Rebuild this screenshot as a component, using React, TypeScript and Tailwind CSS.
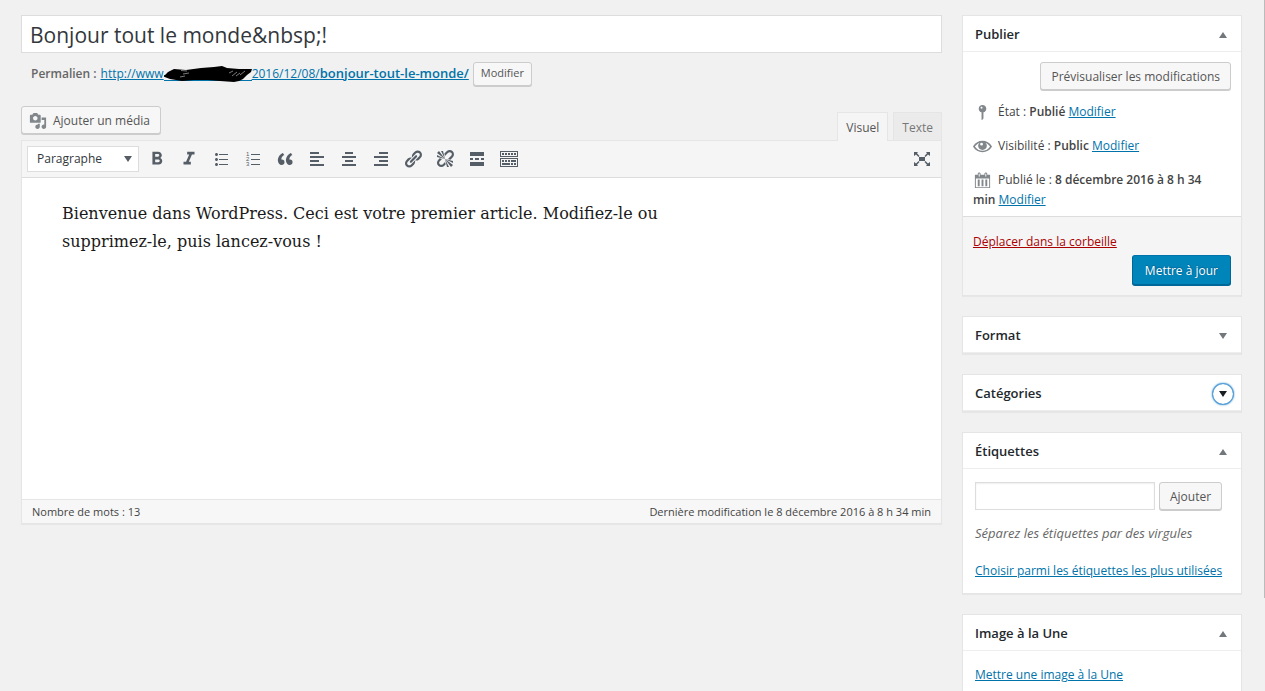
import type { ReactNode } from "react";
import { MdFormatBold, MdFormatItalic } from "react-icons/md";

const paths = {
  ul: "M5.5 7C4.67 7 4 6.33 4 5.5 4 4.68 4.67 4 5.5 4 6.32 4 7 4.68 7 5.5 7 6.33 6.32 7 5.5 7zM8 5h9v1H8V5zm-2.5 7c-.83 0-1.5-.67-1.5-1.5C4 9.68 4.67 9 5.5 9c.82 0 1.5.68 1.5 1.5 0 .83-.68 1.5-1.5 1.5zM8 10h9v1H8v-1zm-2.5 7c-.83 0-1.5-.67-1.5-1.5 0-.82.67-1.5 1.5-1.5.82 0 1.5.68 1.5 1.5 0 .83-.68 1.5-1.5 1.5zM8 15h9v1H8v-1z",
  quote:
    "M9.49 13.22c0-.74-.2-1.38-.61-1.9-.62-.78-1.83-.88-2.53-.72-.29-1.65 1.11-3.75 2.92-4.65L7.88 4c-2.73 1.3-5.42 4.28-4.96 8.05C3.21 14.43 4.59 16 6.54 16c.85 0 1.56-.25 2.12-.75s.83-1.18.83-2.03zm8.05 0c0-.74-.2-1.38-.61-1.9-.63-.78-1.83-.88-2.53-.72-.29-1.65 1.11-3.75 2.92-4.65L15.93 4c-2.73 1.3-5.41 4.28-4.95 8.05.29 2.38 1.66 3.95 3.61 3.95.85 0 1.56-.25 2.12-.75s.83-1.18.83-2.03z",
  left: "M12 5V3H3v2h9zm5 4V7H3v2h14zm-5 4v-2H3v2h9zm5 4v-2H3v2h14z",
  center: "M14 5V3H6v2h8zm3 4V7H3v2h14zm-3 4v-2H6v2h8zm3 4v-2H3v2h14z",
  right: "M17 5V3H8v2h9zm0 4V7H3v2h14zm0 4v-2H8v2h9zm0 4v-2H3v2h14z",
  link: "M17.74 2.76c1.68 1.69 1.68 4.41 0 6.1l-1.53 1.52c-1.12 1.12-2.7 1.47-4.14 1.09l2.62-2.61.76-.77.76-.76c.84-.84.84-2.2 0-3.04-.84-.85-2.2-.85-3.04 0l-.77.76-3.38 3.38c-.37-1.44-.02-3.02 1.1-4.14l1.52-1.53c1.69-1.68 4.42-1.68 6.1 0zM8.59 13.43l5.34-5.34c.42-.42.42-1.1 0-1.52-.44-.43-1.13-.39-1.53 0l-5.33 5.34c-.42.42-.42 1.1 0 1.52.44.43 1.13.39 1.52 0zm-.76 2.29l4.14-4.15c.38 1.44.03 3.02-1.09 4.14l-1.52 1.53c-1.69 1.68-4.41 1.68-6.1 0-1.68-1.68-1.68-4.42 0-6.1l1.53-1.52c1.12-1.12 2.7-1.47 4.14-1.1l-4.14 4.15c-.85.84-.85 2.2 0 3.05.84.84 2.2.84 3.04 0z",
  unlink:
    "M17.74 2.26c1.68 1.69 1.68 4.41 0 6.1l-1.53 1.52c-.32.33-.69.58-1.08.77L13 10l1.69-1.64.76-.77.76-.76c.84-.84.84-2.2 0-3.04-.84-.85-2.2-.85-3.04 0l-.77.76-.76.76L10 7l-.65-2.14c.19-.38.44-.75.77-1.07l1.52-1.53c1.69-1.68 4.42-1.68 6.1 0zM2 4l8 6-6-8zm4-2l4 8-2-8H6zM2 6l8 4-8-2V6zm7.36 7.69L10 13l.74 2.35-1.38 1.39c-1.69 1.68-4.41 1.68-6.1 0-1.68-1.68-1.68-4.42 0-6.1l1.39-1.38L7 10l-.69.64-1.52 1.53c-.85.84-.85 2.2 0 3.04.84.85 2.2.85 3.04 0zM18 16l-8-6 6 8zm-4 2l-4-8 2 8h2zm4-4l-8-4 8 2v2z",
  more: "M17 7V3H3v4h14zM6 11V9H3v2h3zm6 0V9H8v2h4zm5 0V9h-3v2h3zm0 6v-4H3v4h14z",
  sink: "M19 2v6H1V2h18zm-1 5V3H2v4h16zM5 4v2H3V4h2zm3 0v2H6V4h2zm3 0v2H9V4h2zm3 0v2h-2V4h2zm3 0v2h-2V4h2zm2 5v9H1V9h18zm-1 8v-7H2v7h16zM5 11v2H3v-2h2zm3 0v2H6v-2h2zm3 0v2H9v-2h2zm6 0v2h-5v-2h5zm-6 3v2H3v-2h8zm3 0v2h-2v-2h2zm3 0v2h-2v-2h2z",
  expand:
    "M7 8h6v4H7zM2 3h4L5 4.300 7.500 7 6.500 8 4 5.500 2 7zM18 3h-4l1 1.300L12.500 7l1 1L16 5.500 18 7zM2 17h4l-1-1.300L7.500 13l-1-1L4 14.500 2 13zM18 17h-4l1-1.300-2.500-2.700 1-1 2.500 2.500 2-1.500z",
  media:
    "M13 11V4c0-.55-.45-1-1-1h-1.67L9 1H5L3.67 3H2c-.55 0-1 .45-1 1v7c0 .55.45 1 1 1h10c.55 0 1-.45 1-1zM7 4.5c1.38 0 2.5 1.12 2.5 2.5S8.38 9.5 7 9.5 4.5 8.38 4.5 7 5.62 4.5 7 4.5zM14 6h5v10.5c0 1.38-1.12 2.5-2.5 2.5S14 17.88 14 16.5s1.12-2.5 2.5-2.5c.17 0 .34.02.5.05V9h-3V6zm-4 8.05V13h2v3.5c0 1.38-1.12 2.5-2.5 2.5S7 17.88 7 16.5 8.12 14 9.5 14c.17 0 .34.02.5.05z",
  pin: "M14 6c0 1.86-1.28 3.41-3 3.86V16c0 1-2 2-2 2V9.86c-1.72-.45-3-2-3-3.86 0-2.21 1.79-4 4-4s4 1.79 4 4zM8 5c0 .55.45 1 1 1s1-.45 1-1-.45-1-1-1-1 .45-1 1z",
  eye: "M19.700 9.400C17.700 6 14 3.900 10 3.900S2.300 6 .3 9.400L0 10l.3.600c2 3.400 5.700 5.500 9.700 5.500s7.700-2.100 9.700-5.500l.3-.6-.3-.6zM10 14.500c-3.200 0-6.200-1.700-8-4.500 1.200-1.800 2.800-3.100 4.700-3.800C5.900 7 5.400 8 5.400 9.200c0 2.500 2.100 4.400 4.600 4.400s4.600-1.900 4.600-4.400c0-1.200-.5-2.200-1.300-3 1.900.7 3.500 2 4.700 3.800-1.800 2.800-4.800 4.500-8 4.500zM9 6a1.500 1.500 0 1 1 0 3 1.500 1.500 0 0 1 0-3z",
  calendar:
    "M15 4h3v14H2V4h3V3c0-.83.67-1.5 1.5-1.5S8 2.17 8 3v1h4V3c0-.83.67-1.5 1.5-1.5S15 2.17 15 3v1zM6 3v2.5c0 .28.22.5.5.5s.5-.22.5-.5V3c0-.28-.22-.5-.5-.5S6 2.720 6 3zm7 0v2.500c0 .28.22.5.5.5s.5-.22.5-.5V3c0-.28-.22-.5-.5-.5s-.5.22-.5.5zm4 14V8H3v9h14zM7 16V9H5v7h2zm4 0V9H9v7h2zm4 0V9h-2v7h2z",
};

type IconName = keyof typeof paths;

function Icon({ name, className = "size-5" }: { name: IconName; className?: string }) {
  return (
    <svg viewBox="0 0 20 20" className={className} fill="currentColor" fillRule="evenodd" aria-hidden="true">
      <path d={paths[name]} />
    </svg>
  );
}

function NumberedIcon() {
  return (
    <svg viewBox="0 0 20 20" className="size-5" fill="currentColor" aria-hidden="true">
      <path d="M8 5h9v1H8zM8 10h9v1H8zM8 15h9v1H8z" />
      <g fontSize="6" fontFamily="Liberation Sans, sans-serif">
        <text x="3" y="7">1</text>
        <text x="3" y="12">2</text>
        <text x="3" y="17">3</text>
      </g>
    </svg>
  );
}

const tools: { label: string; icon: ReactNode }[] = [
  { label: "Gras", icon: <MdFormatBold className="size-[22px] shrink-0" /> },
  { label: "Italique", icon: <MdFormatItalic className="size-[22px] shrink-0" /> },
  { label: "Liste à puces", icon: <Icon name="ul" /> },
  { label: "Liste numérotée", icon: <NumberedIcon /> },
  { label: "Bloc de citation", icon: <Icon name="quote" /> },
  { label: "Aligner à gauche", icon: <Icon name="left" /> },
  { label: "Centrer", icon: <Icon name="center" /> },
  { label: "Aligner à droite", icon: <Icon name="right" /> },
  { label: "Insérer un lien", icon: <Icon name="link" /> },
  { label: "Supprimer le lien", icon: <Icon name="unlink" /> },
  { label: "Lire la suite", icon: <Icon name="more" /> },
  { label: "Ouvrir la barre d’outils", icon: <Icon name="sink" /> },
];

function Button({ children, small }: { children: ReactNode; small?: boolean }) {
  return (
    <button
      type="button"
      className={`flex items-center rounded-[3px] border border-[#ccc] bg-[#f7f7f7] text-[#555] shadow-[0_1px_0_#ccc] ${
        small ? "h-6 px-[7px] text-[11px]" : "h-7 px-[10px] pt-0.5 text-[12px]"
      }`}
    >
      {children}
    </button>
  );
}

function Link({ children }: { children: ReactNode }) {
  return (
    <a href="#" className="text-[#0073aa] underline">
      {children}
    </a>
  );
}

function Panel({
  title,
  open,
  focused,
  children,
}: {
  title: string;
  open?: boolean;
  focused?: boolean;
  children?: ReactNode;
}) {
  return (
    <section className="border border-[#e5e5e5] bg-white shadow-[0_1px_1px_rgba(0,0,0,0.04)]">
      <header className="flex h-9 items-center justify-between border-b border-[#eee] pt-[3px] pr-2 pl-3">
        <h2 className="text-[13px] font-semibold text-[#23282d]">{title}</h2>
        <button
          type="button"
          aria-label={`Ouvrir ou fermer : ${title}`}
          aria-expanded={!!open}
          className={`flex size-5 items-center justify-center rounded-full ${
            focused
              ? "text-[#191e23] shadow-[0_0_0_1px_#5b9dd9,0_0_2px_1px_rgba(30,140,190,0.8)]"
              : "text-[#72777c]"
          }`}
        >
          <svg viewBox="0 0 8 6" className="h-[6px] w-2" fill="currentColor" aria-hidden="true">
            <path d={open ? "M4 0l4 6H0z" : "M0 0h8L4 6z"} />
          </svg>
        </button>
      </header>
      {children}
    </section>
  );
}

// Marker strokes that hide the domain name in the permalink
function Scribble() {
  return (
    <svg viewBox="0 0 88 18" className="-my-1 inline-block h-[18px] w-[88px] align-middle" aria-hidden="true">
      <path d="M0 14.500H88" stroke="#0073aa" />
      <path d="M1 9L4 6l6-3 12 1 15-2 13-1 8-1 5 2 12 1 13 0-1 3-4 3-4 4-4 2-5 1-14-1-12-1-14 0-12 1-12-2-8-3z" />
      <path
        d="M17 4.500l6 .5M19 8l6-1M16 11l5-1M68 10l5-4M72 10l4-3M76 9l5-4M65 7l4-2"
        stroke="#ccc"
        strokeWidth="0.6"
      />
    </svg>
  );
}

function Editor() {
  return (
    <div>
      <div className="flex items-start justify-between">
        <Button>
          <Icon name="media" className="-ml-[3px] mr-[6px] size-[18px] text-[#82878c]" />
          Ajouter un média
        </Button>
        <div className="mt-[6px] flex gap-[5px] text-[12px]">
          <button type="button" className="relative z-10 -mb-px h-[29px] border border-b-0 border-[#e5e5e5] bg-[#f5f5f5] px-2 pt-0.5 text-[#555]">
            Visuel
          </button>
          <button type="button" className="h-7 border border-b-0 border-[#e5e5e5] bg-[#ebebeb] px-2 pt-0.5 text-[#777]">
            Texte
          </button>
        </div>
      </div>

      <div className="border border-[#e5e5e5] bg-white shadow-[0_1px_1px_rgba(0,0,0,0.04)]">
        <div className="flex h-[37px] items-center border-b border-[#ddd] bg-[#f5f5f5] px-[5px] text-[#555d66]">
          <div className="relative mr-[6px]">
            <select
              aria-label="Format du texte"
              className="h-[26px] w-28 appearance-none border border-[#ddd] bg-white pl-[9px] text-[12px] text-[#32373c]"
            >
              <option>Paragraphe</option>
            </select>
            <svg viewBox="0 0 8 6" className="pointer-events-none absolute top-[10px] right-[7px] h-[6px] w-2" fill="currentColor" aria-hidden="true">
              <path d="M0 0h8L4 6z" />
            </svg>
          </div>
          <div className="flex gap-1">
            {tools.map((t) => (
              <button key={t.label} type="button" aria-label={t.label} className="flex size-7 items-center justify-center pr-1">
                {t.icon}
              </button>
            ))}
          </div>
          <button type="button" aria-label="Plein écran" className="ml-auto flex size-7 items-center justify-center">
            <Icon name="expand" />
          </button>
        </div>

        <div className="min-h-[321px] px-10 pt-[22px]">
          <p className="max-w-[640px] font-['DejaVu_Serif',serif] text-[16px] leading-7 text-[#1a1a1a]">
            Bienvenue dans WordPress. Ceci est votre premier article. Modifiez-le ou supprimez-le, puis lancez-vous !
          </p>
        </div>

        <footer className="flex h-6 items-center justify-between border-t border-[#e5e5e5] bg-[#f7f7f7] px-[10px] pt-px text-[11px] text-[#444]">
          <span>Nombre de mots : 13</span>
          <span>Dernière modification le 8 décembre 2016 à 8 h 34 min</span>
        </footer>
      </div>
    </div>
  );
}

export default function App() {
  return (
    <div className="relative flex min-h-screen items-start gap-5 bg-[#f1f1f1] pt-[15px] pr-[23px] pl-[21px] font-['Open_Sans','Noto_Sans',sans-serif] text-[12px] text-[#444]">
      <main className="min-w-0 flex-1">
        <input
          aria-label="Titre"
          defaultValue="Bonjour tout le monde&amp;nbsp;!"
          className="block h-[38px] w-full border border-[#ddd] bg-white px-2 pt-0.5 text-[21px] text-[#32373c] outline-none"
        />
        <div className="mt-2 mb-5 flex h-[25px] items-center gap-1 pl-[10px] text-[#666]">
          <strong className="font-semibold">Permalien :</strong>
          <a href="#" className="text-[#0073aa] underline">
            http://www
            <Scribble />
            2016/12/08/<span className="text-[13px] font-semibold">bonjour-tout-le-monde/</span>
          </a>
          <Button small>Modifier</Button>
        </div>
        <Editor />
      </main>

      <aside className="flex w-[280px] shrink-0 flex-col gap-5">
        <Panel title="Publier" open>
          <div className="flex justify-end pt-[10px] pr-[10px]">
            <Button>Prévisualiser les modifications</Button>
          </div>
          <div className="pt-3 pr-6 pb-[6px] pl-[10px] leading-5">
            <p className="mb-[14px]">
              <Icon name="pin" className="-my-1 mr-[6px] inline size-[19px] text-[#82878c]" />
              État : <b className="font-semibold">Publié</b> <Link>Modifier</Link>
            </p>
            <p className="mb-[14px]">
              <Icon name="eye" className="-my-1 mr-[6px] inline size-[19px] text-[#82878c]" />
              Visibilité : <b className="font-semibold">Public</b> <Link>Modifier</Link>
            </p>
            <p>
              <Icon name="calendar" className="-my-1 mr-[6px] inline size-[19px] text-[#82878c]" />
              Publié le : <b className="font-semibold">8 décembre 2016 à 8 h 34 min</b> <Link>Modifier</Link>
            </p>
          </div>
          <div className="border-t border-[#ddd] bg-[#f5f5f5] px-[10px] pt-[15px] pb-[10px]">
            <a href="#" className="block leading-5 text-[#a00] underline">
              Déplacer dans la corbeille
            </a>
            <button
              type="button"
              className="mt-[3px] ml-auto block h-[30px] rounded-[3px] border border-[#006799] border-t-[#0073aa] bg-[#0085ba] px-3 pt-0.5 text-white shadow-[0_1px_0_#006799] [text-shadow:0_-1px_1px_#006799,1px_0_1px_#006799]"
            >
              Mettre à jour
            </button>
          </div>
        </Panel>

        <Panel title="Format" />
        <Panel title="Catégories" focused />

        <Panel title="Étiquettes" open>
          <div className="px-3 pt-[13px] pb-3 leading-5">
            <div className="flex gap-1">
              <input
                aria-label="Ajouter une étiquette"
                className="h-7 w-[180px] border border-[#ddd] bg-white px-1 shadow-[inset_0_1px_2px_rgba(0,0,0,0.07)]"
              />
              <Button>Ajouter</Button>
            </div>
            <p className="mt-[13px] text-[13px] text-[#666] italic">Séparez les étiquettes par des virgules</p>
            <p className="mt-[18px]">
              <Link>Choisir parmi les étiquettes les plus utilisées</Link>
            </p>
          </div>
        </Panel>

        <Panel title="Image à la Une" open>
          <p className="px-3 pt-[14px] pb-3 leading-5">
            <Link>Mettre une image à la Une</Link>
          </p>
        </Panel>
      </aside>

      <div className="absolute top-0 right-0 h-[598px] w-px bg-[#bbb]" />
    </div>
  );
}
